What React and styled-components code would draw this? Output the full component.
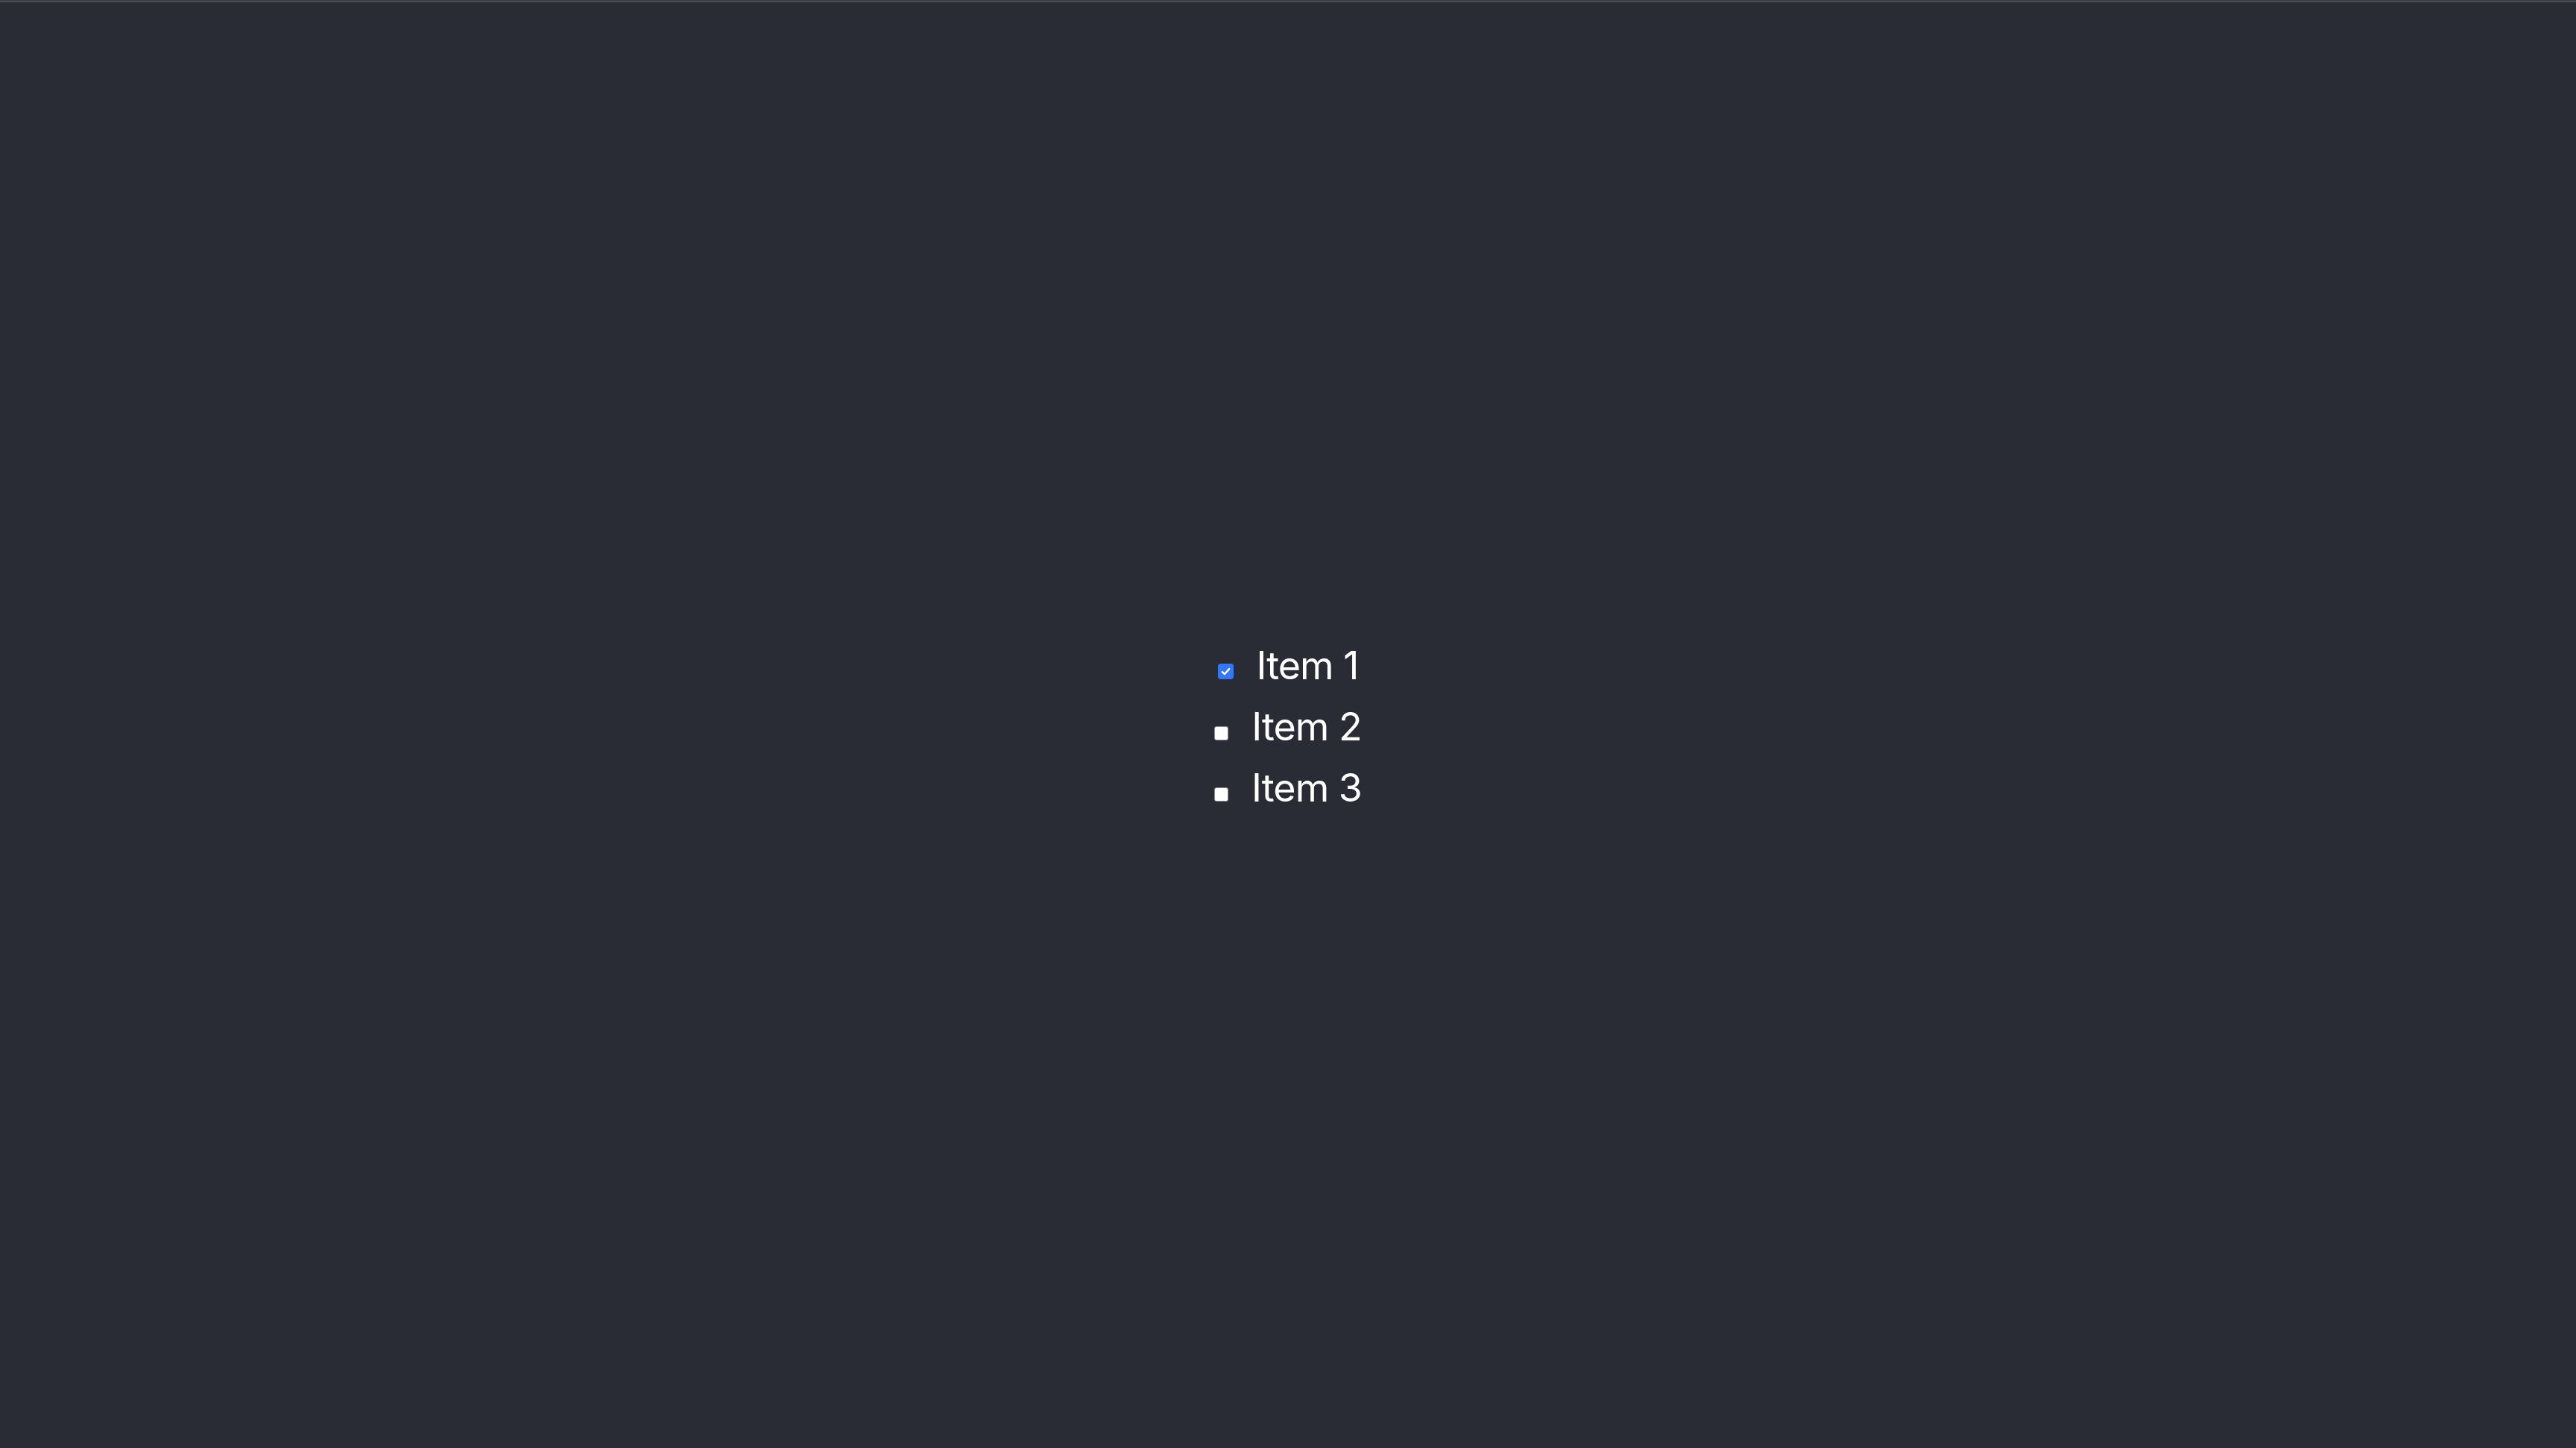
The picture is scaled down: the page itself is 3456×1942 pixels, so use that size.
import { useState } from "react";
import styled, { createGlobalStyle } from "styled-components";

const GlobalStyle = createGlobalStyle`
  html, body {
    margin: 0;
    padding: 0;
    background: #292c35;
  }
  body {
    font-family: Inter, "Noto Sans", sans-serif;
  }
`;

const Page = styled.div`
  box-sizing: border-box;
  min-height: 100vh;
  border-top: 2px solid #3d3e42;
  box-shadow: inset 0 1px 0 #5c5d60;
  display: flex;
  align-items: center;
  justify-content: center;
  padding-top: 6px;
`;

const List = styled.div`
  display: flex;
  flex-direction: column;
  align-items: center;
`;

const Row = styled.label`
  display: flex;
  align-items: baseline;
  gap: 31px;
  height: 82px;
  line-height: 82px;
  font-size: 52px;
  letter-spacing: -1px;
  color: #ffffff;
  cursor: pointer;
`;

const Box = styled.span`
  position: relative;
  display: inline-block;
  box-sizing: border-box;
  width: ${(p) => (p.$checked ? "21px" : "19px")};
  height: ${(p) => (p.$checked ? "21px" : "19px")};
  margin-bottom: 1px;
  border-radius: ${(p) => (p.$checked ? "4px" : "3px")};
  background: ${(p) => (p.$checked ? "#3478f6" : "#ffffff")};
  border: ${(p) => (p.$checked ? "none" : "1px solid #8d8e92")};

  svg {
    position: absolute;
    left: 3px;
    top: 3px;
  }
`;

const Check = () => (
  <svg width="15" height="15" viewBox="0 0 16 16">
    <path
      d="M3 8.6 L6.4 11.8 L13 4.4"
      fill="none"
      stroke="#ffffff"
      strokeWidth="2.6"
      strokeLinecap="round"
      strokeLinejoin="round"
    />
  </svg>
);

const App = () => {
  const [items, setItems] = useState([
    { id: 1, label: "Item 1", done: true },
    { id: 2, label: "Item 2", done: false },
    { id: 3, label: "Item 3", done: false },
  ]);

  const toggle = (id) =>
    setItems((prev) =>
      prev.map((it) => (it.id === id ? { ...it, done: !it.done } : it))
    );

  return (
    <>
      <GlobalStyle />
      <Page>
        <List>
          {items.map((item) => (
            <Row key={item.id} onClick={() => toggle(item.id)}>
              <Box $checked={item.done}>{item.done && <Check />}</Box>
              <span>{item.label}</span>
            </Row>
          ))}
        </List>
      </Page>
    </>
  );
};

export default App;
